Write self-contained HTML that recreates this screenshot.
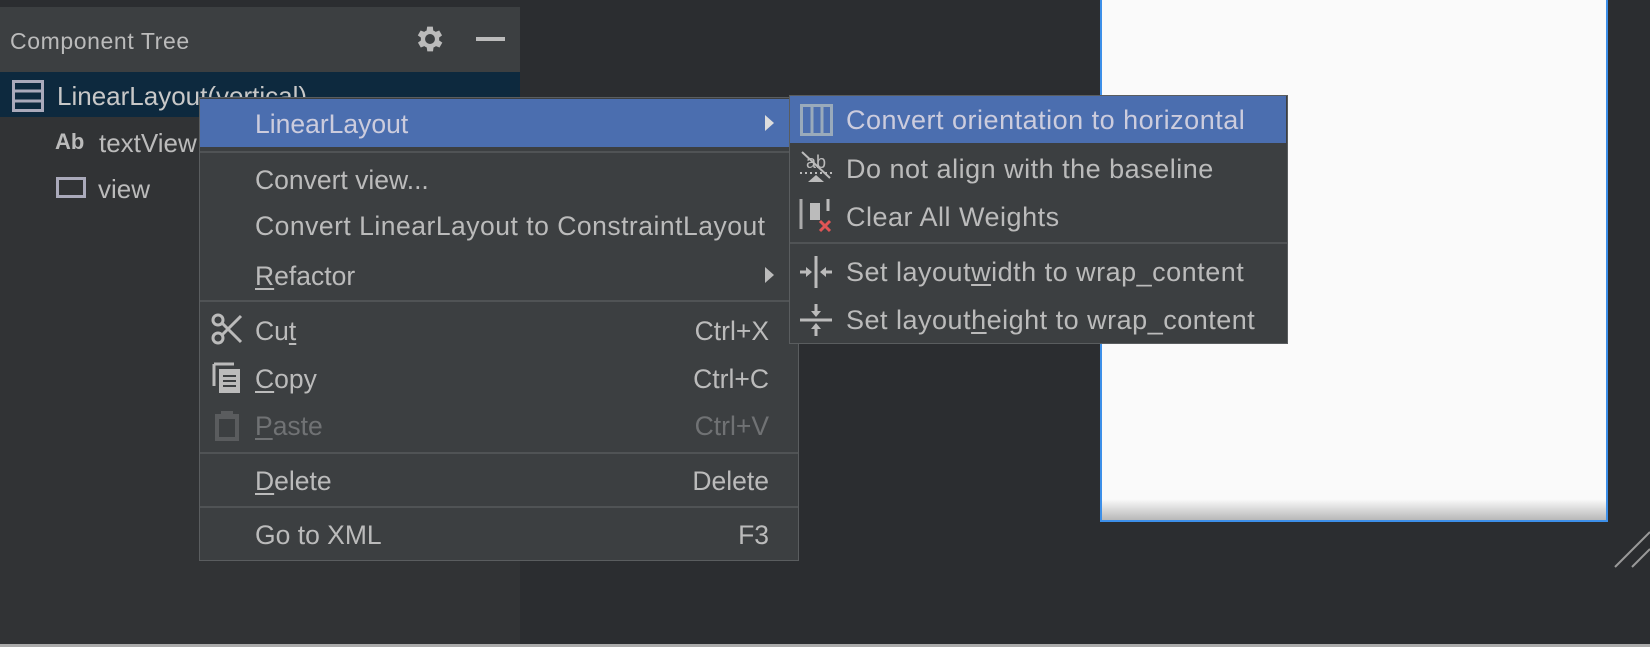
<!DOCTYPE html>
<html><head><meta charset="utf-8"><style>
*{margin:0;padding:0;box-sizing:border-box}
body{width:1650px;height:647px;overflow:hidden;background:#2b2d30;font-family:"Liberation Sans",sans-serif;color:#bbbbbb;position:relative}
.a{position:absolute}
.t{position:absolute;white-space:nowrap;line-height:1}
u{text-decoration:underline;text-underline-offset:3px}
</style></head><body>
<div class="a" style="left:0;top:0;width:520px;height:647px;background:#313335"></div>
<div class="a" style="left:0;top:0;width:520px;height:7px;background:#2b2d30"></div>
<div class="a" style="left:0;top:7px;width:520px;height:65px;background:#3c3f41"></div>
<div class="t" style="left:10px;top:30px;font-size:23px;color:#bbb;letter-spacing:0.6px">Component Tree</div>
<svg class="a" style="left:413px;top:22px" width="34" height="34" viewBox="0 0 24 24"><path fill="#bbb" d="M19.4 13a7.5 7.5 0 000-2l2.1-1.6-2-3.4-2.5 1a7 7 0 00-1.7-1L15 3.3h-4l-.4 2.7a7 7 0 00-1.7 1l-2.5-1-2 3.4L6.6 11a7.5 7.5 0 000 2l-2.1 1.6 2 3.4 2.5-1a7 7 0 001.7 1l.4 2.7h4l.4-2.7a7 7 0 001.7-1l2.5 1 2-3.4zM13 15.5a3.5 3.5 0 110-7 3.5 3.5 0 010 7z" transform="translate(-1 0)"/></svg>
<div class="a" style="left:476px;top:37px;width:29px;height:4px;background:#bbb"></div>
<div class="a" style="left:0;top:72px;width:520px;height:45px;background:#0d293e"></div>
<svg class="a" style="left:12px;top:80px" width="32" height="32"><rect x="1.5" y="1.5" width="29" height="29" fill="none" stroke="#aab" stroke-width="3"/><line x1="2" y1="11" x2="30" y2="11" stroke="#aab" stroke-width="3"/><line x1="2" y1="21" x2="30" y2="21" stroke="#aab" stroke-width="3"/></svg>
<div class="t" style="left:57px;top:83px;font-size:26px;color:#c8c8c8">LinearLayout(vertical)</div>
<div class="t" style="left:55px;top:131px;font-size:22px;font-weight:bold;color:#bbb">Ab</div>
<div class="t" style="left:99px;top:130px;font-size:26px">textView</div>
<div class="a" style="left:56px;top:177px;width:30px;height:21px;border:3px solid #aab"></div>
<div class="t" style="left:98px;top:176px;font-size:26px">view</div>

<div class="a" style="left:1100px;top:-4px;width:508px;height:526px;border:2px solid #3d8fe8;background:linear-gradient(#fafafa 0,#fafafa 96%,#b8b8b8 100%)"></div>
<svg class="a" style="left:1610px;top:525px" width="40" height="45"><line x1="5" y1="42" x2="40" y2="7" stroke="#999" stroke-width="2"/><line x1="22" y1="42" x2="40" y2="24" stroke="#999" stroke-width="2"/></svg>
<div class="a" style="left:0;top:644px;width:1650px;height:3px;background:#aaa"></div>

<div class="a" style="left:199px;top:97px;width:600px;height:464px;background:#3c3f41;border:1px solid #5a5d5f"></div>
<div class="a" style="left:200px;top:99px;width:590px;height:48px;background:#4b6eaf"></div>
<div class="t" style="left:255px;top:111px;font-size:26.5px;color:#ccd">LinearLayout</div>
<div class="a" style="left:765px;top:115px;border-left:9px solid #ddd;border-top:8px solid transparent;border-bottom:8px solid transparent"></div>
<div class="a" style="left:200px;top:151px;width:598px;height:2px;background:#505355"></div>
<div class="t" style="left:255px;top:167px;font-size:26.5px">Convert view...</div>
<div class="t" style="left:255px;top:213px;font-size:26.5px;letter-spacing:0.5px">Convert LinearLayout to ConstraintLayout</div>
<div class="t" style="left:255px;top:263px;font-size:26.5px"><u>R</u>efactor</div>
<div class="a" style="left:765px;top:267px;border-left:9px solid #bbb;border-top:8px solid transparent;border-bottom:8px solid transparent"></div>
<div class="a" style="left:200px;top:300px;width:598px;height:2px;background:#505355"></div>
<svg class="a" style="left:211px;top:313px" width="32" height="32" viewBox="0 0 32 32"><circle cx="7" cy="7" r="5" fill="none" stroke="#bbb" stroke-width="3"/><circle cx="7" cy="25" r="5" fill="none" stroke="#bbb" stroke-width="3"/><path d="M11 10L30 29M11 22L30 3" stroke="#bbb" stroke-width="3"/></svg>
<div class="t" style="left:255px;top:318px;font-size:26.5px">Cu<u>t</u></div>
<div class="t" style="right:881px;top:318px;font-size:26.5px">Ctrl+X</div>
<svg class="a" style="left:212px;top:362px" width="30" height="32"><path d="M2 2v22" stroke="#bbb" stroke-width="3"/><path d="M2 2h20" stroke="#bbb" stroke-width="3"/><rect x="7" y="7" width="21" height="24" fill="#bbb"/><path d="M11 14h13M11 19h13M11 24h13" stroke="#3c3f41" stroke-width="2"/></svg>
<div class="t" style="left:255px;top:366px;font-size:26.5px"><u>C</u>opy</div>
<div class="t" style="right:881px;top:366px;font-size:26.5px">Ctrl+C</div>
<svg class="a" style="left:214px;top:410px" width="28" height="32"><rect x="1" y="4" width="24" height="27" fill="#5a5c5e"/><rect x="7" y="1" width="12" height="6" fill="#5a5c5e"/><rect x="5" y="9" width="16" height="18" fill="#3c3f41"/></svg>
<div class="t" style="left:255px;top:413px;font-size:26.5px;color:#707274"><u>P</u>aste</div>
<div class="t" style="right:881px;top:413px;font-size:26.5px;color:#707274">Ctrl+V</div>
<div class="a" style="left:200px;top:452px;width:598px;height:2px;background:#505355"></div>
<div class="t" style="left:255px;top:468px;font-size:26.5px"><u>D</u>elete</div>
<div class="t" style="right:881px;top:468px;font-size:26.5px">Delete</div>
<div class="a" style="left:200px;top:506px;width:598px;height:2px;background:#505355"></div>
<div class="t" style="left:255px;top:522px;font-size:26.5px">Go to XML</div>
<div class="t" style="right:881px;top:522px;font-size:26.5px">F3</div>

<div class="a" style="left:789px;top:95px;width:499px;height:249px;background:#3c3f41;border:1px solid #5a5d5f"></div>
<div class="a" style="left:790px;top:96px;width:496px;height:47px;background:#4b6eaf"></div>
<svg class="a" style="left:800px;top:104px" width="33" height="32"><rect x="1.5" y="1.5" width="30" height="29" fill="none" stroke="#9ab" stroke-width="3"/><path d="M12 2v28M22 2v28" stroke="#9ab" stroke-width="3"/></svg>
<div class="t" style="left:846px;top:107px;font-size:27px;letter-spacing:0.5px;color:#ccd">Convert orientation to horizontal</div>
<svg class="a" style="left:798px;top:148px" width="36" height="36"><text x="8" y="20" font-size="18" fill="#bbb" font-family="Liberation Sans">ab</text><path d="M4 4L32 30" stroke="#bbb" stroke-width="2"/><path d="M2 25h32" stroke="#bbb" stroke-width="2" stroke-dasharray="2 3"/><path d="M10 34l8-7 8 7z" fill="#bbb"/></svg>
<div class="t" style="left:846px;top:156px;font-size:27px;letter-spacing:0.5px">Do not align with the baseline</div>
<svg class="a" style="left:798px;top:197px" width="36" height="36"><path d="M3 2v30" stroke="#aaa" stroke-width="3"/><rect x="12" y="6" width="10" height="17" fill="#bbb"/><path d="M30 2v12" stroke="#bbb" stroke-width="3"/><path d="M22 24l10 10M32 24L22 34" stroke="#e05555" stroke-width="3"/></svg>
<div class="t" style="left:846px;top:204px;font-size:27px;letter-spacing:0.5px">Clear All Weights</div>
<div class="a" style="left:790px;top:242px;width:497px;height:2px;background:#505355"></div>
<svg class="a" style="left:798px;top:254px" width="36" height="36"><path d="M18 2v32" stroke="#bbb" stroke-width="3"/><path d="M2 18h8M34 18h-8" stroke="#bbb" stroke-width="3"/><path d="M14 18l-6-5v10zM22 18l6-5v10z" fill="#bbb"/></svg>
<div class="t" style="left:846px;top:259px;font-size:27px;letter-spacing:0.5px">Set layout<u>w</u>idth to wrap_content</div>
<svg class="a" style="left:798px;top:302px" width="36" height="36"><path d="M2 18h32" stroke="#bbb" stroke-width="3"/><path d="M18 2v8M18 34v-8" stroke="#bbb" stroke-width="3"/><path d="M18 15l-5-6h10zM18 21l-5 6h10z" fill="#bbb"/></svg>
<div class="t" style="left:846px;top:307px;font-size:27px;letter-spacing:0.5px">Set layout<u>h</u>eight to wrap_content</div>
</body></html>
